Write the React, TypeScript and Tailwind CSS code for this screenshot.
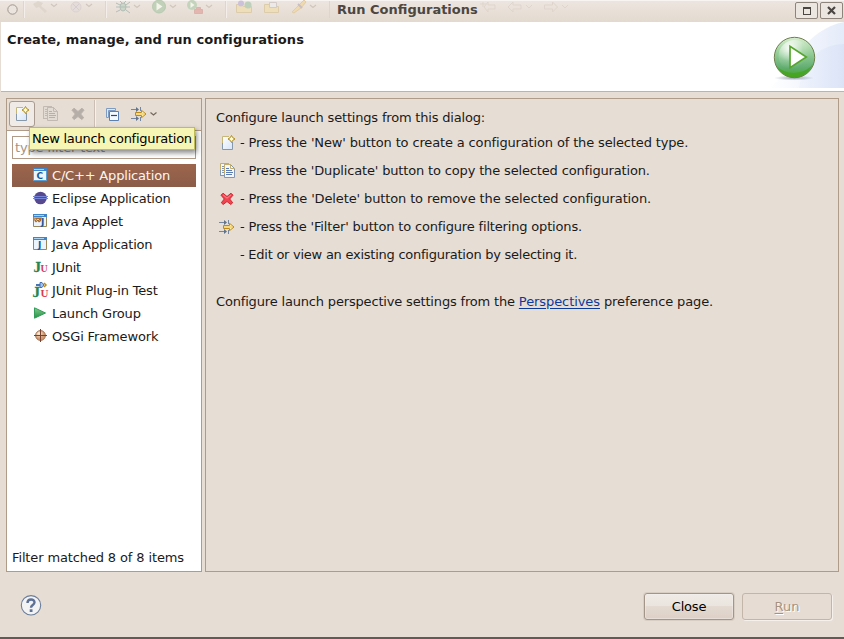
import React from "react";

type IconProps = { className?: string };

function NewIcon({ className = "" }: IconProps) {
  return (
    <svg width="16" height="16" viewBox="0 0 16 16" className={className}>
      <defs>
        <linearGradient id="page" x1="0" y1="0" x2="1" y2="1">
          <stop offset="0" stopColor="#fffefa" />
          <stop offset="1" stopColor="#d6e6fa" />
        </linearGradient>
      </defs>
      <path d="M1.500 1.500h10v13h-10z" fill="url(#page)" />
      <path d="M1.500 9V1.500H8" fill="none" stroke="#c8b679" />
      <path d="M1.500 8v6.500h10V7" fill="none" stroke="#8798ab" />
      <path d="M10.500 .500l1.300 2.200L14 4l-2.200 1.300-1.300 2.200-1.300-2.200L7 4l2.200-1.300z" fill="#fff7b8" stroke="#b08a1c" />
      <path d="M10.500 2.500v3M9 4h3" stroke="#fffbe0" />
    </svg>
  );
}

function CopyIcon({ className = "", muted = false }: IconProps & { muted?: boolean }) {
  const edge = muted ? "#c2bab2" : "#8396ae";
  const gold = muted ? "#c2bab2" : "#c3ad68";
  const fill = muted ? "#e2dbd4" : "#f3f7fd";
  return (
    <svg width="16" height="16" viewBox="0 0 16 16" className={className}>
      <path d="M.500 .500h8v12h-8z" fill={fill} />
      <path d="M.500 13V.500H9" fill="none" stroke={gold} />
      <path d="M.500 7v5.500h5" fill="none" stroke={edge} />
      <path d="M2 3.500h2M2 5.500h2M2 7.500h2M2 9.500h2" stroke={edge} />
      <path d="M4.500 1.500h6l4 4v9h-10z" fill={fill} stroke={edge} />
      <path d="M4.500 11V1.500h6v4h4" fill="none" stroke={gold} />
      <path d="M6 5.500h3M6 7.500h6M6 9.500h7M6 11.500h6" stroke={muted ? "#b8b0a8" : "#5c7bb0"} />
    </svg>
  );
}

function DeleteIcon({ className = "", muted = false }: IconProps & { muted?: boolean }) {
  return (
    <svg width="14" height="14" viewBox="0 0 14 14" className={className}>
      <path
        d="M3 1.200L7 4.500 11 1.200 13 3.200 9.700 7 12.700 10.700 10.800 12.500 7 9.500 3.200 12.500 1.300 10.700 4.300 7 1 3.200z"
        fill={muted ? "#b5aea8" : "#f04450"}
        stroke={muted ? "#b9b1aa" : "#cf2630"}
        strokeWidth="1"
        strokeLinejoin="round"
      />
      {!muted && <path d="M3 2.800l4 3.400 4-3.400" fill="none" stroke="#ff8a90" />}
    </svg>
  );
}

function FilterIcon({ className = "" }: IconProps) {
  return (
    <svg width="17" height="16" viewBox="0 0 17 16" className={className}>
      <path d="M0 3.500h7M0 12.500h7" stroke="#7587a0" />
      <path d="M5 1v5L8 3.500zM5 10v5L8 12.500z" fill="#60738c" />
      <path d="M9.500 1v4M9.500 11v4" stroke="#7587a0" />
      <path d="M4.500 6.500h6V4.300L15 8l-4.500 3.700V9.500h-6z" fill="#fff0ae" stroke="#bd8a1a" />
      <path d="M5 8h9" stroke="#e2ad37" strokeWidth=".7" />
    </svg>
  );
}

function CollapseIcon({ className = "" }: IconProps) {
  return (
    <svg width="14" height="14" viewBox="0 0 14 14" className={className}>
      <path d="M.500 9.500V.500h9v2" fill="#dce8f7" stroke="#7e9bc4" />
      <path d="M.500 9.500h2v-7h7" fill="none" stroke="#7e9bc4" />
      <path d="M3.500 3.500h9v9h-9z" fill="#f5faff" stroke="#5b80b4" />
      <path d="M5 7.500h6" stroke="#174b93" strokeWidth="1.200" />
    </svg>
  );
}

function Chevron({ className = "" }: IconProps) {
  return (
    <svg width="7" height="4" viewBox="0 0 7 4" className={className}>
      <path d="M.500 .500l3 2.500 3-2.500" fill="none" stroke="#75695f" strokeWidth="1.200" />
    </svg>
  );
}

function WindowIcon({ letter, applet = false }: { letter: string; applet?: boolean }) {
  return (
    <svg width="16" height="16" viewBox="0 0 16 16">
      <path d="M1.500 1.500h13v12h-13z" fill="#eaf4fe" stroke={letter === "C" ? "#5b9cd0" : "#9c8657"} />
      <path d="M1 1h14v3H1z" fill="#3f85cc" />
      <path d="M2 2.500h10" stroke="#a9d4f6" />
      {applet && (
        <>
          <path d="M2 4.500h8l-1 3.500-2 1.500-1.500-1.500L4 9.500 2.500 8z" fill="#a56b35" />
          <path d="M3 5.500l1.500 2L6 6l1.500 1.500" fill="none" stroke="#f1c886" />
        </>
      )}
      <text
        x={applet ? "9" : letter === "C" ? "4.500" : "6"}
        y={applet ? "11.500" : "12"}
        fontFamily="DejaVu Sans"
        fontWeight="700"
        fontSize="9"
        fill="#17589b"
      >
        {letter}
      </text>
    </svg>
  );
}

function EclipseIcon() {
  return (
    <svg width="16" height="16" viewBox="0 0 16 16">
      <circle cx="8.500" cy="8" r="6.300" fill="#57498e" />
      <path d="M1 6.500h15M1 8.500h15" stroke="#7583d8" />
    </svg>
  );
}

function JUnitIcon({ plugin = false }: { plugin?: boolean }) {
  return (
    <svg width="16" height="16" viewBox="0 0 16 16" className="overflow-visible">
      <g fontFamily="Liberation Serif" fontWeight="700">
        <text
          x={plugin ? ".500" : "1.500"}
          y={plugin ? "15" : "12.500"}
          fontSize="15"
          fill="#288554"
          stroke="#288554"
          strokeWidth=".3"
        >
          J
        </text>
        <text x="8.500" y={plugin ? "15" : "12.500"} fontSize={plugin ? "11" : "10"} fill="#d83951">
          U
        </text>
      </g>
      {plugin && (
        <>
          <path d="M4 3h4" stroke="#4974b6" strokeWidth="2" />
          <path d="M8 .500h2L12 3l-2 2.500H8z" fill="#9fc3ee" stroke="#4671b1" />
          <path d="M12 1l2 2-2 2" fill="none" stroke="#bd8b1d" strokeWidth="1.500" />
        </>
      )}
    </svg>
  );
}

function LaunchIcon() {
  return (
    <svg width="16" height="16" viewBox="0 0 16 16">
      <defs>
        <linearGradient id="launch" x1="0" y1="0" x2="0" y2="1">
          <stop stopColor="#83ca8c" />
          <stop offset="1" stopColor="#229245" />
        </linearGradient>
      </defs>
      <path d="M2.500 2.800L13.500 8 2.500 13.200z" fill="url(#launch)" stroke="#339c58" strokeLinejoin="round" />
    </svg>
  );
}

function OsgiIcon() {
  return (
    <svg width="16" height="16" viewBox="0 0 16 16">
      <defs>
        <radialGradient id="osgi" cx=".35" cy=".3">
          <stop stopColor="#fff1db" />
          <stop offset="1" stopColor="#d19b73" />
        </radialGradient>
      </defs>
      <circle cx="8.500" cy="7.500" r="4.900" fill="url(#osgi)" stroke="#a36d50" />
      <path d="M8.500 1v13M2 7.500h13" stroke="#77422f" />
    </svg>
  );
}

function GhostToolbar() {
  return (
    <svg width="600" height="22" viewBox="0 0 600 22" className="absolute left-0 top-0">
      <path d="M23.500 1v17M105.500 1v17M225.500 1v17M329.500 1v17" stroke="#dfd5cc" />
      <path d="M24.500 1v17M106.500 1v17M226.500 1v17" stroke="#f3eeea" />
      <g fill="none" stroke="#d0c6bd" strokeWidth="1.200">
        <path d="M51 4l3 2.500L57 4M86 4l3 2.500L92 4M134 5l3 2.500 3-2.500M170 5l3 2.500 3-2.500M206 5l3 2.500 3-2.500M310 5l3 2.500 3-2.500" />
      </g>
      <path d="M33 4l5-3 5 2-2 3 6 5-2 2-6-6-3 1z" fill="#dfd6ce" />
      <circle cx="76" cy="7" r="5" fill="#e4dcd8" stroke="#dcd3d0" />
      <path d="M73 4l6 6M79 4l-6 6" stroke="#d6cdd0" />
      <g stroke="#b3beb6" fill="none">
        <ellipse cx="123" cy="7" rx="3" ry="4" fill="#cbd5c8" />
        <path d="M116 3l4 2M116 7h14M116 12l4-2M126 5l4-3M126 10l4 3M120 1l2 2M126 1l-2 2" />
      </g>
      <circle cx="159" cy="6.500" r="6.500" fill="#c1d1b9" stroke="#b8c9b0" />
      <path d="M156.500 2.500v8l6-4z" fill="#f4f4eb" />
      <circle cx="192" cy="5" r="5" fill="#c4d4bc" />
      <path d="M190.500 2v6l4-3z" fill="#f4f4eb" />
      <path d="M194.500 9.500h8v4h-8zM196.500 9V7.500h4V9" fill="#e3b6af" stroke="#dbb3ad" />
      <path d="M236.500 12.500v-8h5l2 2h8v6zM264.500 12.500v-8h5l2 2h7v6z" fill="#eedfba" stroke="#ddccaa" />
      <circle cx="241" cy="3.500" r="3" fill="#cbc1d9" />
      <circle cx="248" cy="5" r="3.500" fill="#bcd0bc" />
      <path d="M269.500 2.500h7v5h-7z" fill="#ebeae8" stroke="#d3cbc7" />
      <path d="M292 12l7-7 5-5 2 2-5 6-7 5z" fill="#efd9ae" stroke="#e2ccaa" />
      <path d="M298 4l4 4" stroke="#c5bfcb" strokeWidth="2" />
      <path d="M484 7l4-5v3h7v4h-7v3zM508 7l5-5v3h8v4h-8v3zM544.500 5h8V2l5 5-5 5V9h-8z" fill="none" stroke="#dfd5cc" />
      <path d="M526 5l3 3 3-3M562 5l3 3 3-3M483 2v5M480 4h6" fill="none" stroke="#dfd5cc" />
    </svg>
  );
}

function RunEmblem() {
  return (
    <svg width="90" height="66" viewBox="0 0 90 66">
      <defs>
        <linearGradient id="swoop" x1="0" x2="1">
          <stop stopColor="#fff" />
          <stop offset="1" stopColor="#e4ebf9" />
        </linearGradient>
        <linearGradient id="swoop2" x1="0" x2="1">
          <stop stopColor="#edf2fc" />
          <stop offset="1" stopColor="#d8e1f6" />
        </linearGradient>
        <linearGradient id="ball" x1="0" y1="0" x2="0" y2="1">
          <stop stopColor="#d8eed0" />
          <stop offset=".35" stopColor="#9bd19c" />
          <stop offset=".75" stopColor="#61ad72" />
          <stop offset="1" stopColor="#43a617" />
        </linearGradient>
        <radialGradient id="shine" cx=".35" cy=".25" r=".65">
          <stop stopColor="#fff" stopOpacity=".95" />
          <stop offset=".65" stopColor="#fff" stopOpacity=".15" />
          <stop offset="1" stopColor="#fff" stopOpacity="0" />
        </radialGradient>
        <radialGradient id="shadow">
          <stop stopColor="#66708a" stopOpacity=".6" />
          <stop offset="1" stopColor="#66708a" stopOpacity="0" />
        </radialGradient>
      </defs>
      <path d="M16 66C37 47 50 8 90 0v66z" fill="url(#swoop)" />
      <path d="M45 66C50 36 68 22 90 22v44z" fill="url(#swoop2)" opacity=".75" />
      <ellipse cx="40" cy="56" rx="20" ry="2.500" fill="url(#shadow)" />
      <circle cx="40.500" cy="35.500" r="20.200" fill="url(#ball)" stroke="#6d7f4c" />
      <path d="M23 44c7 9 27 10 36-2-4 9-11 13-18.500 13S27 52 23 44z" fill="#45a41f" opacity=".8" />
      <circle cx="40.500" cy="34" r="16" fill="url(#shine)" />
      <path d="M37.500 24.300v21.400l16.300-10.700z" transform="translate(-1.500)" fill="#fff" stroke="#56a62c" strokeWidth="1.700" />
    </svg>
  );
}

const types = [
  { label: "C/C++ Application", icon: <WindowIcon letter="C" />, text: "ml-[4px] tracking-[-0.18px]" },
  { label: "Eclipse Application", icon: <EclipseIcon />, text: "ml-[4px] tracking-[-0.2px]" },
  { label: "Java Applet", icon: <WindowIcon letter="J" applet />, text: "ml-[4px] tracking-[-0.27px]" },
  { label: "Java Application", icon: <WindowIcon letter="J" />, text: "ml-[4px] tracking-[-0.25px]" },
  { label: "JUnit", icon: <JUnitIcon />, text: "ml-[4px] tracking-[-0.3px]" },
  { label: "JUnit Plug-in Test", icon: <JUnitIcon plugin />, text: "ml-[4px] tracking-[-0.17px]" },
  { label: "Launch Group", icon: <LaunchIcon />, text: "ml-[4px] tracking-[-0.17px]" },
  { label: "OSGi Framework", icon: <OsgiIcon />, text: "ml-[4px] tracking-[-0.14px]" },
];

const hints = [
  {
    text: "- Press the 'New' button to create a configuration of the selected type.",
    icon: <NewIcon className="ml-px" />,
    spacing: "tracking-[-0.145px]",
  },
  {
    text: "- Press the 'Duplicate' button to copy the selected configuration.",
    icon: <CopyIcon />,
    spacing: "tracking-[-0.155px]",
  },
  {
    text: "- Press the 'Delete' button to remove the selected configuration.",
    icon: <DeleteIcon />,
    spacing: "tracking-[-0.125px]",
  },
  {
    text: "- Press the 'Filter' button to configure filtering options.",
    icon: <FilterIcon className="-ml-px" />,
    spacing: "tracking-[-0.17px]",
  },
  {
    text: "- Edit or view an existing configuration by selecting it.",
    icon: null,
    spacing: "tracking-[-0.25px]",
  },
];

export default function App() {
  return (
    <div className="flex h-[639px] w-[844px] flex-col overflow-hidden bg-[#e6ddd4] font-['DejaVu_Sans',sans-serif] text-[13px] leading-[16px] text-[#1a1a1a]">
      <div className="relative flex h-[22px] shrink-0 bg-gradient-to-b from-[#ede6e0] to-[#e3d9cf] shadow-[inset_0_1px_#f7f4f1]">
        <GhostToolbar />
        <svg width="20" height="22" className="relative shrink-0">
          <circle cx="12.500" cy="9.500" r="4.700" fill="#ebe4de" stroke="#a0968e" />
        </svg>
        <div className="relative flex-1 whitespace-nowrap pl-[317px] pt-[2px] font-bold text-[#4b4743]">Run Configurations</div>
        <div className="relative flex gap-[2px] pr-px pt-[2px]">
          <div className="flex h-[17px] w-[23px] items-center justify-center rounded-[2px] border border-[#8d847c] bg-[#ece6e1]">
            <span className="h-[8px] w-[8px] border border-t-2 border-[#4b4642]" />
          </div>
          <div className="flex h-[17px] w-[23px] items-center justify-center rounded-[2px] border border-[#8d847c] bg-[#ece6e1]">
            <svg width="9" height="9" viewBox="0 0 9 9">
              <path d="M1 1l7 7M8 1L1 8" stroke="#4b4642" strokeWidth="2.200" />
            </svg>
          </div>
        </div>
      </div>

      <div className="ml-px flex h-[70px] shrink-0 justify-between border-b border-[#bdb3aa] bg-white">
        <h1 className="pl-[6px] pt-[10px] font-bold tracking-[0.09px]">Create, manage, and run configurations</h1>
        <RunEmblem />
      </div>

      <div className="flex h-[480px] shrink-0 gap-[3px] pl-[6px] pr-[5px] pt-[6px]">
        <div className="flex h-[474px] w-[196px] flex-col border border-[#b09a88] bg-white">
          <div className="relative flex h-[32px] shrink-0 border-b border-[#b09a88] bg-[#e6ddd4]">
            <div className="ml-[2px] mt-[2px] flex h-[26px] w-[26px] items-center justify-center rounded-[3px] border border-[#a99b8f] bg-[#f0ebe6]">
              <NewIcon className="ml-[2px]" />
            </div>
            <CopyIcon className="ml-[8px] mt-[7px]" muted />
            <DeleteIcon className="ml-[12px] mt-[8px]" muted />
            <div className="ml-[9px] mt-px h-[29px] w-[2px] border-l border-[#cbbfb4] bg-[#f5f1ed]" />
            <CollapseIcon className="ml-[10px] mt-[9px]" />
            <FilterIcon className="ml-[11px] mt-[7px]" />
            <Chevron className="ml-[2px] mt-[13px]" />
            <div className="absolute left-[22px] top-[28px] z-10 h-[23px] w-[166px] whitespace-nowrap border border-[#c0bd59] bg-[#f6f5b4] pl-[2px] pt-[3px] tracking-[-0.27px] text-black shadow-[2px_3px_5px_rgba(0,0,0,0.45)]">
              New launch configuration
            </div>
          </div>
          <div className="mx-[5px] mt-[5px] h-[23px] shrink-0 border border-[#b09a88] pl-[2px] pt-[3px] tracking-[-0.2px] text-[#a79482]">
            type filter text
          </div>
          <ul className="mx-[5px] mt-[5px]">
            {types.map((t, i) => (
              <li
                key={t.label}
                className={
                  i === 0
                    ? "flex h-[23px] items-start bg-gradient-to-b from-[#9d654d] to-[#8b5c48] pl-[20px] pt-[3px] text-[#fff5ee]"
                    : "flex h-[23px] items-start pl-[20px] pt-[3px]"
                }
              >
                {t.icon}
                <span className={"whitespace-nowrap pt-px " + t.text}>{t.label}</span>
              </li>
            ))}
          </ul>
          <div className="mb-[5px] ml-[5px] mt-auto tracking-[-0.13px]">Filter matched 8 of 8 items</div>
        </div>

        <div className="h-[474px] flex-1 border border-[#b09a88] pl-[10px] pt-[11px]">
          <p className="tracking-[-0.185px]">Configure launch settings from this dialog:</p>
          <ul className="mt-[3px]">
            {hints.map((h) => (
              <li key={h.text} className="flex h-[28px] items-center">
                <span className="flex w-[24px] pl-[4px]">{h.icon}</span>
                <span className={"whitespace-nowrap " + h.spacing}>{h.text}</span>
              </li>
            ))}
          </ul>
          <p className="mt-[25px] whitespace-nowrap tracking-[-0.17px]">
            Configure launch perspective settings from the{" "}
            <a className="tracking-[-0.08px] text-[#0b3a9c] underline underline-offset-2">Perspectives</a>
            <span className="tracking-[-0.12px]"> preference page.</span>
          </p>
        </div>
      </div>

      <div className="flex flex-1 items-start border-b-2 border-[#625a54] pl-[20px] pr-[12px] pt-[21px]">
        <svg width="22" height="22" viewBox="0 0 22 22" className="mt-[2px]">
          <circle cx="11" cy="10.300" r="9.700" fill="#f4f3f3" stroke="#6a7d9b" strokeWidth="1.100" />
          <path d="M7.500 8c0-4.500 7.200-4.500 7-.500-.200 2.700-3.500 2.500-3.500 5.300" fill="none" stroke="#5d7096" strokeWidth="2.400" />
          <path d="M9.700 14.300h2.800V17H9.700z" fill="#5d7096" />
        </svg>
        <button className="ml-auto h-[27px] w-[90px] rounded-[3px] border border-[#a39689] bg-[linear-gradient(to_bottom,#f0ebe7,#ebe4de_49%,#e4dad2_50%,#ddd0c6)] text-black shadow-[inset_0_0_0_1px_#f6f2ef66,0_0_0_1px_#d9cec4]">
          <span className="tracking-[-0.2px]">Close</span>
        </button>
        <button className="ml-[8px] h-[27px] w-[90px] rounded-[3px] border border-[#c4b5a9] bg-[#e6dcd4] text-[#a69280] shadow-[1px_1px_0_#f5f0ec] [text-shadow:1px_1px_#fff]">
          <span className="underline underline-offset-2">R</span>un
        </button>
      </div>
    </div>
  );
}
